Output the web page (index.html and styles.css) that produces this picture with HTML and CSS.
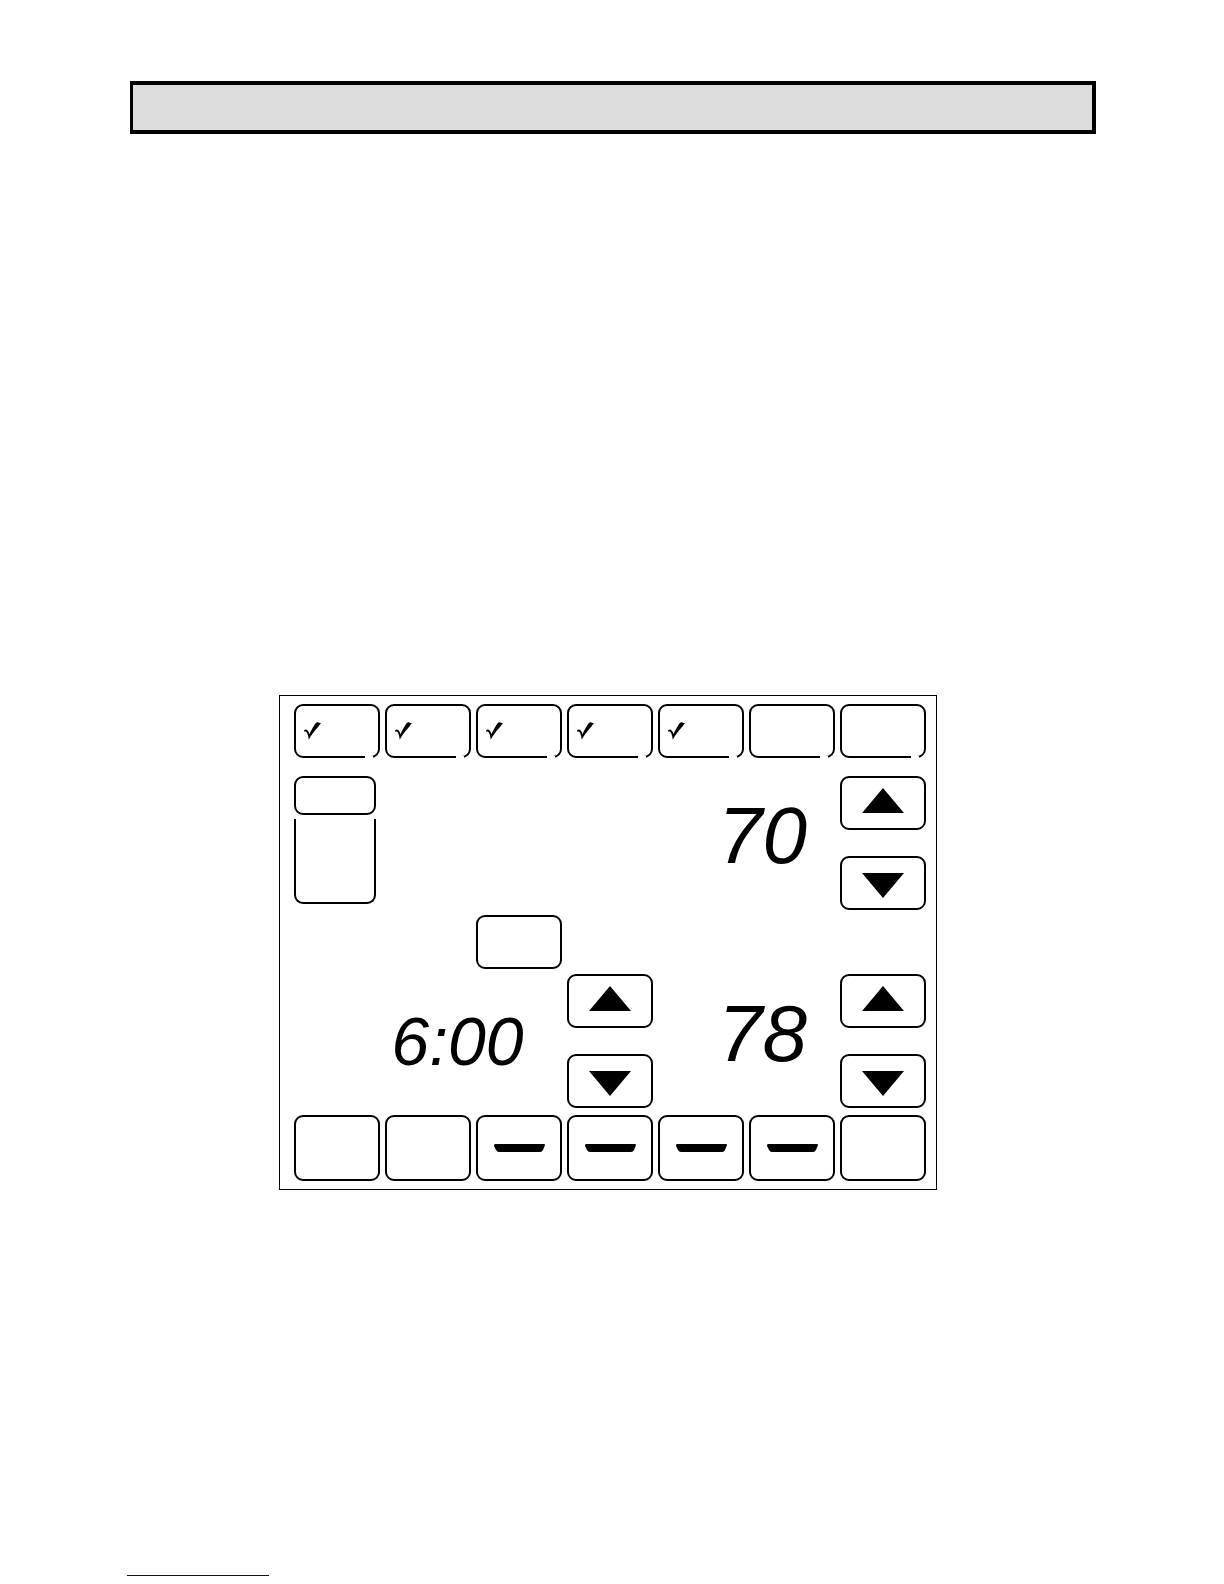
FILE: index.html
```html
<!DOCTYPE html>
<html lang="en">
<head>
    <meta charset="utf-8">
    <title>Thermostat schedule</title>
    <link rel="stylesheet" href="styles.css">
</head>

<body>

<svg class="defs" aria-hidden="true">
    <symbol id="check" viewBox="0 0 17 18">
        <path d="M0 8.6C1 7.6 1.8 7.4 2.6 7.8C4.2 8.6 5 10.2 5.4 12.2C7.2 8.4 9.4 4.2 11.6 1.2C12.6 0 13.6 0 14.4 .4C15.4 .9 16.2 1.2 17 1.2C15.8 2.4 14.8 4.2 13.6 5.6C10.2 9.4 7.4 13 4.7 17.8C4.4 14 3.4 11 2.2 9.8C1.6 9.2 1 9.4 0 9.6Z"/>
    </symbol>
    <symbol id="up" viewBox="0 0 42 25">
        <path d="M21 0L42 25H0Z"/>
    </symbol>
    <symbol id="down" viewBox="0 0 42 25">
        <path d="M0 0H42L21 25Z"/>
    </symbol>
    <symbol id="dash" viewBox="0 0 51 8">
        <path d="M1 0H50Q51 0 51 1L49 6Q48 8 46 8H5Q3 8 2 6L0 2Q0 0 1 0Z"/>
    </symbol>
</svg>

<div class="banner"></div>

<div class="screen">
    <div class="days">
        <button class="key day" aria-label="Monday"><svg class="check"><use href="#check"/></svg></button>
        <button class="key day" aria-label="Tuesday"><svg class="check"><use href="#check"/></svg></button>
        <button class="key day" aria-label="Wednesday"><svg class="check"><use href="#check"/></svg></button>
        <button class="key day" aria-label="Thursday"><svg class="check"><use href="#check"/></svg></button>
        <button class="key day" aria-label="Friday"><svg class="check"><use href="#check"/></svg></button>
        <button class="key day" aria-label="Saturday"></button>
        <button class="key day" aria-label="Sunday"></button>
    </div>

    <div class="settings">
        <div class="fan">
            <button class="key fan-key" aria-label="Fan"></button>
            <div class="fan-modes"></div>
        </div>
        <div class="temp heat">70</div>
        <div class="arrows heat-arrows">
            <button class="key up" aria-label="Heat up"><svg class="arrow"><use href="#up"/></svg></button>
            <button class="key down" aria-label="Heat down"><svg class="arrow"><use href="#down"/></svg></button>
        </div>

        <button class="key cancel" aria-label="Cancel period"></button>

        <div class="time">6:00</div>
        <div class="arrows time-arrows">
            <button class="key up" aria-label="Time later"><svg class="arrow"><use href="#up"/></svg></button>
            <button class="key down" aria-label="Time earlier"><svg class="arrow"><use href="#down"/></svg></button>
        </div>
        <div class="temp cool">78</div>
        <div class="arrows cool-arrows">
            <button class="key up" aria-label="Cool up"><svg class="arrow"><use href="#up"/></svg></button>
            <button class="key down" aria-label="Cool down"><svg class="arrow"><use href="#down"/></svg></button>
        </div>
    </div>

    <div class="periods">
        <button class="key" aria-label="Done"></button>
        <button class="key" aria-label="Edit"></button>
        <button class="key" aria-label="Wake"><svg class="dash"><use href="#dash"/></svg></button>
        <button class="key" aria-label="Leave"><svg class="dash"><use href="#dash"/></svg></button>
        <button class="key" aria-label="Return"><svg class="dash"><use href="#dash"/></svg></button>
        <button class="key" aria-label="Sleep"><svg class="dash"><use href="#dash"/></svg></button>
        <button class="key" aria-label="Back"></button>
    </div>
</div>

<hr class="footline">

</body>
</html>
```

FILE: styles.css
```css
* {box-sizing: border-box;}
body {margin: 0; padding: 81px 128px 8px 130px; min-height: 100vh;}
body {display: flex; flex-direction: column;}
body {background: #fff; color: #000; font-family: "Liberation Sans", Arial, sans-serif;}
svg {display: block; fill: #000;}
.defs {display: none;}

.banner {height: 53px; border: 4px solid #000; border-left-width: 3px; background: #ddd;}

.screen {width: 100%; max-width: 658px; margin: 561px 0 40px 149px;}
.screen {padding: 8px 10px 8px 14px; border: 1px solid #000;}
.days, .settings, .periods {display: grid; grid-template-columns: repeat(7, 1fr); column-gap: 5px;}
.days {grid-auto-rows: 54px;}
.settings {grid-template-rows: auto 54px auto; row-gap: 5px; margin: 18px 0 7px;}
.periods {grid-auto-rows: 66px;}

.key {display: flex; align-items: center; justify-content: center;}
.key {margin: 0; padding: 0; border: 2px solid #000; border-radius: 9px; background: #fff;}

.day {position: relative; justify-content: flex-start; padding-left: 8px;}
/* small break in the bottom edge of each day key */
.day::after {content: ""; position: absolute; right: 5px; bottom: -2px; width: 8px; height: 2px; background: #fff;}
.check {width: 17px; height: 18px;}

.fan {grid-area: 1 / 1; margin-right: 4px;}
.fan-key {width: 100%; height: 39px;}
.fan-modes {height: 85px; margin-top: 4px; border: 2px solid #000; border-top: 0; border-radius: 0 0 9px 9px;}

.arrows {display: flex; flex-direction: column; gap: 26px;}
.arrows .key {height: 54px;}
.arrow {width: 42px; height: 25px;}
.up {padding-bottom: 5px;}
.down {padding-top: 5px;}
.heat-arrows {grid-area: 1 / 7;}
.time-arrows {grid-area: 3 / 4;}
.cool-arrows {grid-area: 3 / 7;}

.cancel {grid-area: 2 / 3;}

.temp, .time {font-style: italic; white-space: nowrap;}
.temp {padding-right: 28px; font-size: 80px; line-height: 120px; text-align: right;}
.heat {grid-area: 1 / 5 / 2 / 7;}
.cool {grid-area: 3 / 5 / 4 / 7;}
.time {grid-area: 3 / 2 / 4 / 4; padding-right: 32px; font-size: 68px; line-height: 134px; text-align: center;}

.dash {width: 51px; height: 8px;}

.footline {width: 142px; margin: auto 0 0 -3px; border: 0; border-top: 1px solid #00008b;}
```
